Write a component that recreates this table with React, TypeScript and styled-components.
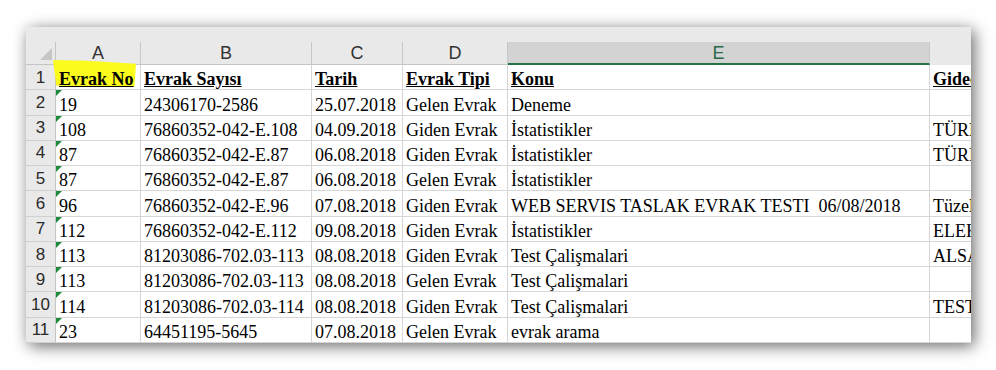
import React from 'react';
import styled, { createGlobalStyle } from 'styled-components';

const GlobalStyle = createGlobalStyle`
  html, body {
    margin: 0;
    padding: 0;
    background: #ffffff;
  }
`;

const columns = ['A', 'B', 'C', 'D', 'E', 'F'];
const selectedColumn = 'E';

const headers = ['Evrak No', 'Evrak Sayısı', 'Tarih', 'Evrak Tipi', 'Konu', 'Gideceği'];

const rows: string[][] = [
  ['19', '24306170-2586', '25.07.2018', 'Gelen Evrak', 'Deneme', ''],
  ['108', '76860352-042-E.108', '04.09.2018', 'Giden Evrak', 'İstatistikler', 'TÜRKİYE'],
  ['87', '76860352-042-E.87', '06.08.2018', 'Giden Evrak', 'İstatistikler', 'TÜRKİYE'],
  ['87', '76860352-042-E.87', '06.08.2018', 'Gelen Evrak', 'İstatistikler', ''],
  ['96', '76860352-042-E.96', '07.08.2018', 'Giden Evrak', 'WEB SERVIS TASLAK EVRAK TESTI  06/08/2018', 'Tüzel'],
  ['112', '76860352-042-E.112', '09.08.2018', 'Giden Evrak', 'İstatistikler', 'ELEKTRONİK'],
  ['113', '81203086-702.03-113', '08.08.2018', 'Giden Evrak', 'Test Çalişmalari', 'ALSANCAK'],
  ['113', '81203086-702.03-113', '08.08.2018', 'Gelen Evrak', 'Test Çalişmalari', ''],
  ['114', '81203086-702.03-114', '08.08.2018', 'Giden Evrak', 'Test Çalişmalari', 'TEST'],
  ['23', '64451195-5645', '07.08.2018', 'Gelen Evrak', 'evrak arama', ''],
];

const App = () => {
  return (
    <>
      <GlobalStyle />
      <Page>
        <Window>
          <TopStrip />
          <Sheet>
            <Corner>
              <SelectAll />
            </Corner>
            {columns.map((col) => (
              <ColHead key={col} $selected={col === selectedColumn} $hidden={col === 'F'}>
                {col === 'F' ? '' : col}
              </ColHead>
            ))}

            <RowHead>1</RowHead>
            {headers.map((text, i) => (
              <Cell key={text} $bold $marked={i === 0}>
                <span>{text}</span>
              </Cell>
            ))}

            {rows.map((row, r) => (
              <React.Fragment key={r}>
                <RowHead>{r + 2}</RowHead>
                {row.map((text, c) => (
                  <Cell key={c} $flag={c === 0}>
                    {text}
                  </Cell>
                ))}
              </React.Fragment>
            ))}
          </Sheet>
        </Window>
      </Page>
    </>
  );
};

export default App;

const Page = styled.div`
  padding: 27px 0 0 26px;
  height: 343px;
`;

const Window = styled.div`
  width: 945px;
  height: 316px;
  overflow: hidden;
  background: #ffffff;
  box-shadow: 3px 3px 15px rgba(0, 0, 0, 0.6);
  display: flex;
  flex-direction: column;
`;

const TopStrip = styled.div`
  height: 15px;
  flex: none;
  background: #e9e9e9;
`;

const Sheet = styled.div`
  display: grid;
  grid-template-columns: 30px 85px 171px 91px 105px 422px 200px;
  grid-template-rows: 23px repeat(11, 1fr);
  height: 301px;
`;

const Corner = styled.div`
  background: #e9e9e9;
  border-right: 1px solid #c4c4c4;
  border-bottom: 1px solid #c4c4c4;
  display: flex;
  align-items: flex-end;
  justify-content: flex-end;
  padding: 0 3px 4px 0;
`;

const SelectAll = styled.div`
  width: 0;
  height: 0;
  border-left: 12px solid transparent;
  border-bottom: 12px solid #c6c6c6;
`;

const ColHead = styled.div<{ $selected?: boolean; $hidden?: boolean }>`
  background: ${(p) => (p.$selected ? '#d3d3d3' : '#e9e9e9')};
  border-right: 1px solid ${(p) => (p.$hidden ? 'transparent' : '#c8c8c8')};
  border-bottom: ${(p) =>
    p.$selected ? '2px solid #217346' : p.$hidden ? '1px solid transparent' : '1px solid #c4c4c4'};
  color: ${(p) => (p.$selected ? '#2a6a48' : '#333333')};
  font-family: 'Liberation Sans', Arial, sans-serif;
  font-size: 18px;
  display: flex;
  align-items: center;
  justify-content: center;
  padding-top: 1px;
`;

const RowHead = styled.div`
  background: #e9e9e9;
  border-right: 1px solid #c4c4c4;
  border-bottom: 1px solid #d0d0d0;
  color: #2b2b2b;
  font-family: 'Liberation Sans', Arial, sans-serif;
  font-size: 17px;
  display: flex;
  align-items: center;
  justify-content: center;
  padding-top: 1px;
`;

const Cell = styled.div<{ $bold?: boolean; $flag?: boolean; $marked?: boolean }>`
  position: relative;
  z-index: ${(p) => (p.$marked ? 2 : 'auto')};
  border-right: 1px solid #d6d6d6;
  border-bottom: 1px solid #d6d6d6;
  font-family: 'Liberation Serif', 'Times New Roman', serif;
  font-size: 18px;
  line-height: 20px;
  font-weight: ${(p) => (p.$bold ? 700 : 400)};
  text-decoration: ${(p) => (p.$bold ? 'underline' : 'none')};
  color: #000000;
  white-space: pre;
  display: flex;
  align-items: flex-end;
  padding-left: 3px;
  overflow: ${(p) => (p.$marked ? 'visible' : 'hidden')};

  span {
    position: relative;
    z-index: 1;
  }

  ${(p) =>
    p.$flag &&
    `
    &::after {
      content: '';
      position: absolute;
      top: 0;
      left: 0;
      border-top: 6px solid #1f8a3b;
      border-right: 6px solid transparent;
    }
  `}

  ${(p) =>
    p.$marked &&
    `
    &::before {
      content: '';
      position: absolute;
      left: -3px;
      top: -5px;
      right: 4px;
      bottom: 2px;
      background: #fbfb1e;
      clip-path: polygon(0 0, 40% 3%, 100% 14%, 98% 100%, 4% 94%);
      filter: blur(0.6px);
    }
  `}
`;
